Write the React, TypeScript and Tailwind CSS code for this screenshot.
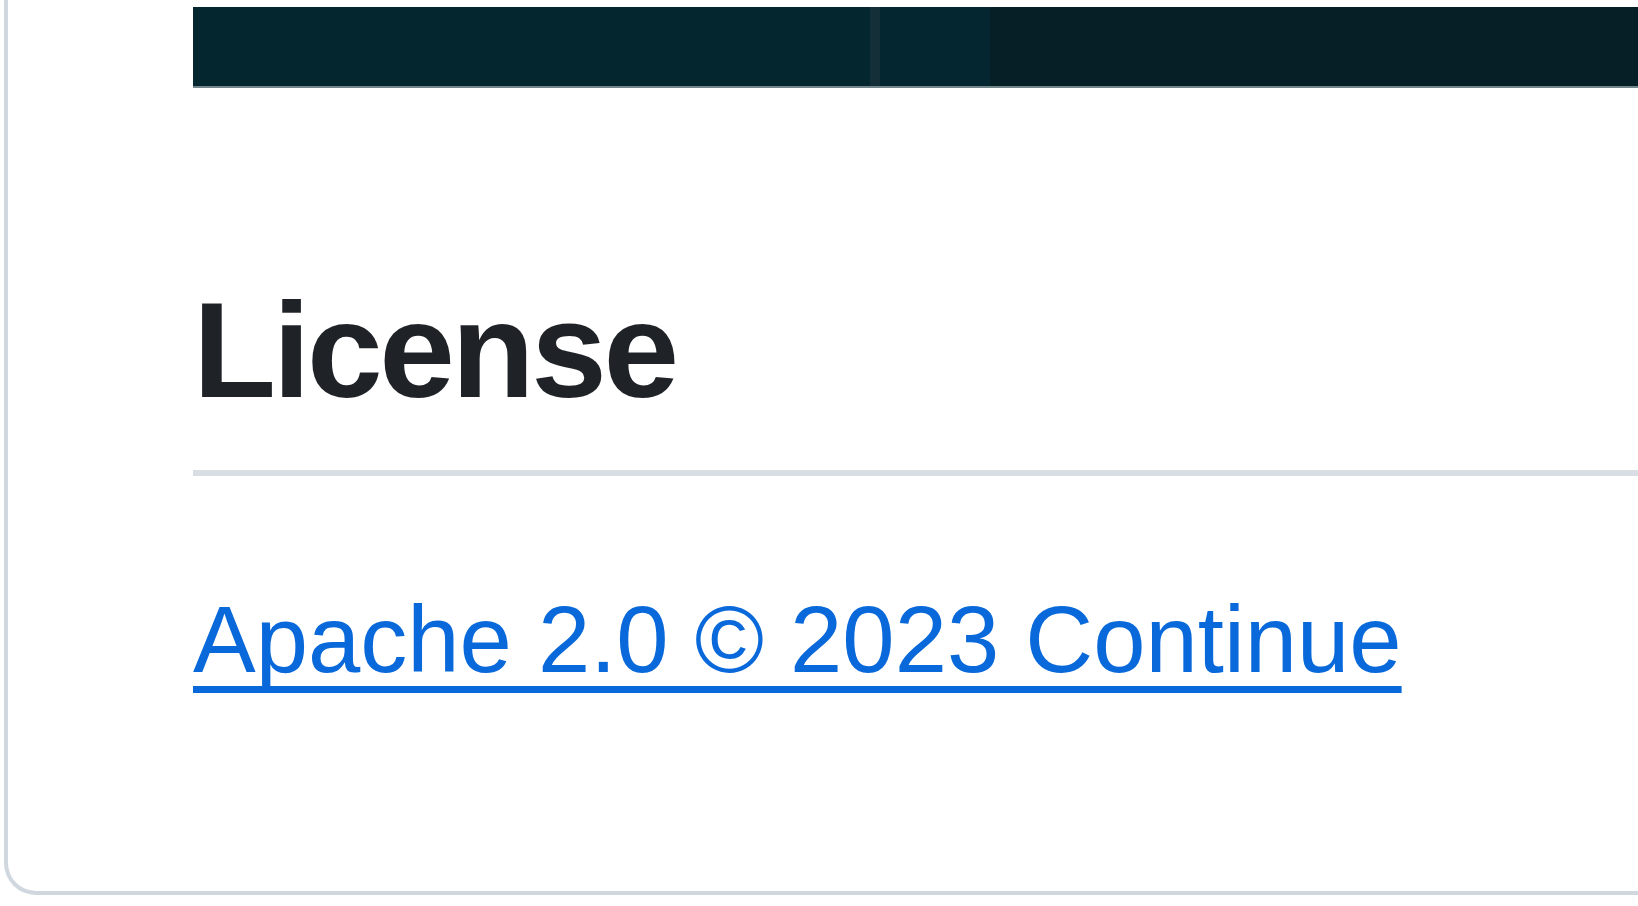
// README footer, seen at a heavy zoom: banner image tail, "License" heading, link.
const BANNER_SEGMENTS = [
  { w: "w-[677px]", bg: "bg-[#03262f]" },
  { w: "w-[10px]", bg: "bg-[#142f38]" },
  { w: "w-[110px]", bg: "bg-[#032630]" },
  { w: "flex-1", bg: "bg-[#061e25]" },
];

export default function App() {
  return (
    <div className="h-[906px] w-full overflow-hidden bg-white font-['Liberation_Sans',Arial,sans-serif]">
      <div className="ml-[4px] mr-[-40px] h-[895px] rounded-bl-[32px] border-b-4 border-l-4 border-[#d0d7de] pl-[185px] pt-[7px]">
        {/* banner (bottom of an image) */}
        <div className="flex h-[79px]">
          {BANNER_SEGMENTS.map((s, i) => (
            <div key={i} className={`${s.w} ${s.bg}`} />
          ))}
        </div>
        <div className="h-[2px] bg-[#71858b]" />

        <h2 className="mt-[177px] border-b-[6px] border-[#d8dee4] pb-[35px] text-[136px] font-bold leading-[1.25] tracking-[-0.025em] text-[#1f2328]">
          License
        </h2>

        <p className="mt-[93px] text-[94px] leading-[1.5]">
          <a
            href="#"
            className="text-[#0969da] underline decoration-[7px] underline-offset-[14px] [text-decoration-skip-ink:none]"
          >
            Apache 2.0 © 2023 Continue
          </a>
        </p>
      </div>
    </div>
  );
}
